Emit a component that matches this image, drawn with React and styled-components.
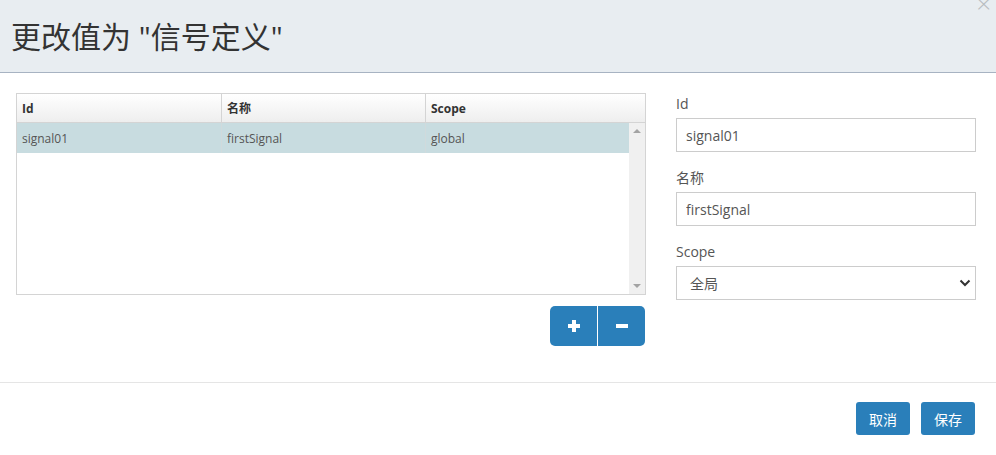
import styled, { createGlobalStyle } from "styled-components";

const GlobalStyle = createGlobalStyle`
    html, body {
        margin: 0;
        padding: 0;
        background: #ffffff;
    }
    body {
        font-family: "Open Sans", "Noto Sans CJK SC", sans-serif;
        color: #333;
    }
`;

const signals = [
    { id: "signal01", name: "firstSignal", scope: "global" },
];

export default function App() {
    return (
        <>
            <GlobalStyle />
            <Modal>
                <Header>
                    <Title>更改值为 "信号定义"</Title>
                    <Close>×</Close>
                </Header>
                <Body>
                    <TableColumn>
                        <Grid>
                            <HeadRow>
                                <HeadCell $w={205}>Id</HeadCell>
                                <HeadCell $w={204}>名称</HeadCell>
                                <HeadCell $last>Scope</HeadCell>
                            </HeadRow>
                            <Viewport>
                                <Rows>
                                    {signals.map((s) => (
                                        <Row key={s.id} $selected>
                                            <Cell $w={205}>{s.id}</Cell>
                                            <Cell $w={204}>{s.name}</Cell>
                                            <Cell $last>{s.scope}</Cell>
                                        </Row>
                                    ))}
                                </Rows>
                                <Scrollbar>
                                    <Arrow $up />
                                    <Arrow />
                                </Scrollbar>
                            </Viewport>
                        </Grid>
                        <ButtonGroup>
                            <GroupButton>
                                <svg width="14" height="14" viewBox="0 0 14 14">
                                    <rect x="5" y="1" width="4" height="12" fill="#fff" />
                                    <rect x="1" y="5" width="12" height="4" fill="#fff" />
                                </svg>
                            </GroupButton>
                            <GroupButton $right>
                                <svg width="14" height="14" viewBox="0 0 14 14">
                                    <rect x="1" y="5" width="12" height="4" fill="#fff" />
                                </svg>
                            </GroupButton>
                        </ButtonGroup>
                    </TableColumn>
                    <Form>
                        <Field>
                            <Label>Id</Label>
                            <Input defaultValue="signal01" />
                        </Field>
                        <Field>
                            <Label>名称</Label>
                            <Input defaultValue="firstSignal" />
                        </Field>
                        <Field>
                            <Label>Scope</Label>
                            <SelectBox>
                                <span>全局</span>
                                <svg width="12" height="8" viewBox="0 0 12 8">
                                    <path d="M1.5 1.5 L6 6 L10.5 1.5" fill="none" stroke="#333" strokeWidth="2" />
                                </svg>
                            </SelectBox>
                        </Field>
                    </Form>
                </Body>
                <Footer>
                    <PrimaryButton>取消</PrimaryButton>
                    <PrimaryButton>保存</PrimaryButton>
                </Footer>
            </Modal>
        </>
    );
}

const Modal = styled.div`
    width: 996px;
    height: 455px;
    background: #fff;
    display: flex;
    flex-direction: column;
    overflow: hidden;
`;

const Header = styled.div`
    position: relative;
    height: 73px;
    flex-shrink: 0;
    background: #e8edf1;
    border-bottom: 1px solid #a7b3c2;
    display: flex;
    align-items: center;
    padding-left: 11px;
    box-sizing: border-box;
`;

const Title = styled.h3`
    margin: 0;
    margin-top: -3px;
    font-size: 30px;
    font-weight: 400;
    color: #333;
    font-family: "Open Sans", "Noto Sans CJK SC", sans-serif;
`;

const Close = styled.span`
    position: absolute;
    top: -9px;
    right: 3px;
    font-size: 22px;
    color: #b8bcc0;
    font-family: "DejaVu Sans", sans-serif;
    font-weight: 300;
`;

const Body = styled.div`
    display: flex;
    padding: 20px 20px 0 16px;
    gap: 30px;
    height: 310px;
    flex-shrink: 0;
    box-sizing: border-box;
    border-bottom: 1px solid #e5e5e5;
`;

const TableColumn = styled.div`
    width: 630px;
    display: flex;
    flex-direction: column;
    align-items: flex-end;
    gap: 11px;
`;

const Grid = styled.div`
    width: 630px;
    height: 202px;
    border: 1px solid #d4d4d4;
    box-sizing: border-box;
    display: flex;
    flex-direction: column;
    font-size: 12px;
`;

const HeadRow = styled.div`
    display: flex;
    height: 28px;
    background: linear-gradient(#ffffff, #eeeeee);
    border-bottom: 1px solid #d4d4d4;
    flex-shrink: 0;
`;

const HeadCell = styled.div`
    ${(p) => (p.$last ? "flex: 1;" : `width: ${p.$w}px;`)}
    border-right: ${(p) => (p.$last ? "none" : "1px solid #d4d4d4")};
    padding-left: 5px;
    display: flex;
    align-items: center;
    font-weight: 700;
    color: #333;
    box-sizing: border-box;
`;

const Viewport = styled.div`
    flex: 1;
    display: flex;
`;

const Rows = styled.div`
    flex: 1;
`;

const Row = styled.div`
    display: flex;
    height: 30px;
    background: ${(p) => (p.$selected ? "#c8dce0" : "#fff")};
`;

const Cell = styled.div`
    ${(p) => (p.$last ? "flex: 1;" : `width: ${p.$w}px;`)}
    border-right: ${(p) => (p.$last ? "none" : "1px solid #d0dadc")};
    padding-left: 5px;
    display: flex;
    align-items: center;
    color: #555;
    box-sizing: border-box;
    font-size: 12px;
`;

const Scrollbar = styled.div`
    width: 16px;
    background: #f0f0f0;
    display: flex;
    flex-direction: column;
    justify-content: space-between;
    align-items: center;
    padding: 6px 0;
    box-sizing: border-box;
`;

const Arrow = styled.div`
    width: 0;
    height: 0;
    border-left: 4px solid transparent;
    border-right: 4px solid transparent;
    ${(p) => (p.$up ? "border-bottom: 4px solid #a3a3a3;" : "border-top: 4px solid #a3a3a3;")}
`;

const ButtonGroup = styled.div`
    display: flex;
    margin-right: 1px;
`;

const GroupButton = styled.button`
    width: ${(p) => (p.$right ? "48px" : "47px")};
    height: 40px;
    border: none;
    background: #2a7fba;
    border-left: ${(p) => (p.$right ? "1px solid #fff" : "none")};
    border-radius: ${(p) => (p.$right ? "0 5px 5px 0" : "5px 0 0 5px")};
    display: flex;
    align-items: center;
    justify-content: center;
    padding: 0;
`;

const Form = styled.div`
    width: 300px;
    display: flex;
    flex-direction: column;
    gap: 16px;
    padding-top: 1px;
`;

const Field = styled.div`
    display: flex;
    flex-direction: column;
    gap: 5px;
`;

const Label = styled.label`
    font-size: 14px;
    color: #555;
    line-height: 19px;
`;

const Input = styled.input`
    height: 34px;
    box-sizing: border-box;
    border: 1px solid #cccccc;
    padding: 0 9px;
    font-size: 14px;
    color: #555;
    font-family: "Open Sans", "Noto Sans CJK SC", sans-serif;
    outline: none;
`;

const SelectBox = styled.div`
    height: 34px;
    box-sizing: border-box;
    border: 1px solid #cccccc;
    padding: 0 4px 0 13px;
    display: flex;
    align-items: center;
    justify-content: space-between;
    font-size: 14px;
    color: #555;
`;

const Footer = styled.div`
    flex: 1;
    display: flex;
    justify-content: flex-end;
    align-items: flex-start;
    padding: 19px 21px 0 0;
    gap: 11px;
`;

const PrimaryButton = styled.button`
    width: 54px;
    height: 33px;
    border: none;
    border-radius: 3px;
    background: #2a7fba;
    color: #fff;
    font-size: 14px;
    font-family: "Open Sans", "Noto Sans CJK SC", sans-serif;
    padding: 0;
`;
